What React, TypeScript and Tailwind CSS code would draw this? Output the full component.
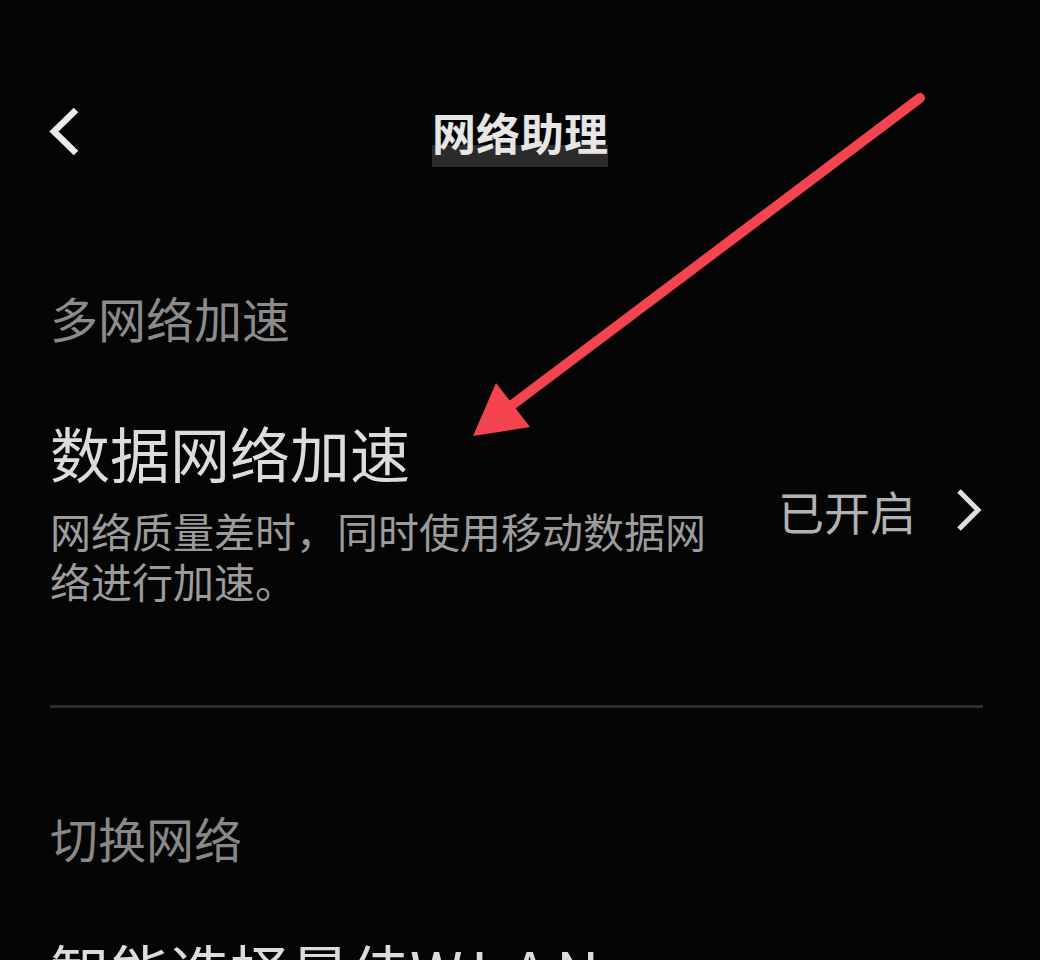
export default function App() {
  return (
    <div className="relative w-[1040px] h-[960px] overflow-hidden bg-[#050505] font-['Noto_Sans_CJK_SC','Noto_Sans',sans-serif]">
      {/* Top bar */}
      <div className="grid grid-cols-[1fr_auto_1fr] items-start px-[46px] pt-[110px]">
        <div className="-mt-[4px]">
          <svg width="36" height="52" viewBox="0 0 36 52" fill="none">
            <path d="M30 4 L8 25.5 L30 47" stroke="#eaeaea" strokeWidth="6.5" strokeLinecap="butt" strokeLinejoin="miter" />
          </svg>
        </div>
        <h1 className="text-[44px] leading-none font-bold text-[#e6e6e6] pb-[13px] bg-[linear-gradient(transparent_35px,#2b2b2b_35px)]">
          网络助理
        </h1>
        <div />
      </div>

      <div className="pl-[50px] pr-[57px]">
        {/* Section: multi-network */}
        <div className="mt-[126px] text-[48px] leading-none text-[#8b8b8b]">多网络加速</div>

        <div className="mt-[81px] flex items-center justify-between">
          <div>
            <div className="text-[60px] leading-none text-[#dcdcdc]">数据网络加速</div>
            <p className="mt-[23px] w-[660px] text-[41px] leading-[50px] text-[#9c9c9c]">
              网络质量差时，同时使用移动数据网络进行加速。
            </p>
          </div>
          <div className="flex items-center -mt-[8px]">
            <span className="text-[46px] leading-none text-[#b2b2b2]">已开启</span>
            <svg className="ml-[40px]" width="27" height="42" viewBox="0 0 27 42" fill="none">
              <path d="M3 2 L22 21 L3 40" stroke="#dedede" strokeWidth="5" />
            </svg>
          </div>
        </div>

        <div className="mt-[100px] h-[3px] bg-[#2c2c2c]" />

        {/* Section: switch network */}
        <div className="mt-[105px] text-[48px] leading-none text-[#888888]">切换网络</div>
        <div className="mt-[79px] text-[60px] leading-none text-[#dcdcdc] whitespace-nowrap">
          智能选择最佳<span className="tracking-[8px]">WLAN</span>
        </div>
      </div>

      {/* Annotation arrow */}
      <svg className="absolute inset-0 pointer-events-none" width="1040" height="960" viewBox="0 0 1040 960">
        <line x1="920" y1="98" x2="508" y2="408" stroke="#f4444f" strokeWidth="10" strokeLinecap="round" />
        <polygon points="473,436 496,383 530,427" fill="#f4444f" />
      </svg>
    </div>
  );
}
